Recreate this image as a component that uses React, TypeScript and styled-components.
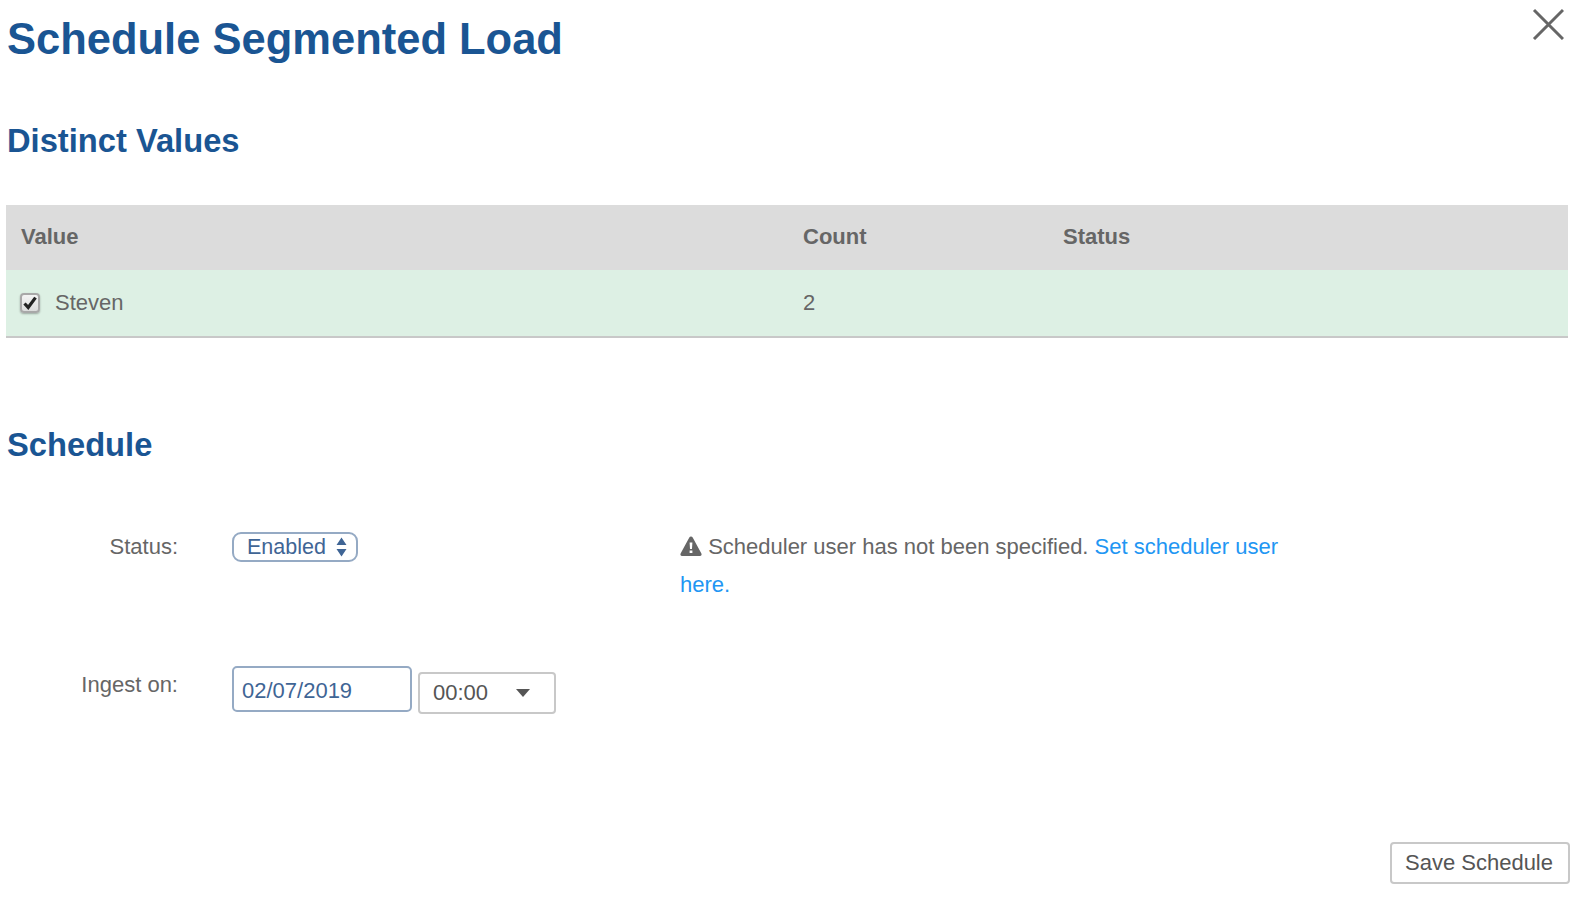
import styled, { createGlobalStyle } from "styled-components"

const GlobalStyle = createGlobalStyle`
    html, body {
        margin: 0;
        padding: 0;
        background: #fff;
    }
    body {
        font-family: "Liberation Sans", Arial, sans-serif;
        color: #666;
    }
`

const App = () => {
    return (
        <Page>
            <GlobalStyle />
            <CloseButton aria-label="Close">
                <svg width="32" height="32" viewBox="0 0 32 32">
                    <path d="M2 2 L31 31 M31 2 L2 31" stroke="#666" strokeWidth="3" fill="none" />
                </svg>
            </CloseButton>
            <Title>Schedule Segmented Load</Title>
            <SectionTitle>Distinct Values</SectionTitle>
            <Table>
                <HeadRow>
                    <ValueCell>Value</ValueCell>
                    <CountCell>Count</CountCell>
                    <StatusCell>Status</StatusCell>
                </HeadRow>
                <BodyRow>
                    <ValueCell>
                        <Check>
                            <svg width="16" height="16" viewBox="0 0 16 16">
                                <path d="M2.5 8.5 L6.2 12.4 L13.5 2.6" stroke="#222" strokeWidth="3.2" fill="none" />
                            </svg>
                        </Check>
                        Steven
                    </ValueCell>
                    <CountCell>2</CountCell>
                    <StatusCell />
                </BodyRow>
            </Table>
            <ScheduleTitle>Schedule</ScheduleTitle>
            <StatusLine>
                <Label>Status:</Label>
                <Dropdown>
                    Enabled
                    <svg width="11" height="20" viewBox="0 0 11 20">
                        <path d="M5.5 0.5 L10.5 8 L0.5 8 Z M0.5 12 L10.5 12 L5.5 19.5 Z" fill="#3f6595" />
                    </svg>
                </Dropdown>
                <Notice>
                    <svg width="22" height="20" viewBox="0 0 22 20">
                        <path
                            fillRule="evenodd"
                            d="M11 0.5 C11.8 0.5 12.3 0.9 12.7 1.6 L21.4 17.4 C22 18.6 21.3 20 20 20 L2 20 C0.7 20 0 18.6 0.6 17.4 L9.3 1.6 C9.7 0.9 10.2 0.5 11 0.5 Z M9.6 6.5 L10 13 L12 13 L12.4 6.5 Z M9.6 14.4 L9.6 17 L12.4 17 L12.4 14.4 Z"
                            fill="#666"
                        />
                    </svg>{" "}
                    Scheduler user has not been specified. <Link>Set scheduler user here.</Link>
                </Notice>
            </StatusLine>
            <IngestLine>
                <IngestLabel>Ingest on:</IngestLabel>
                <DateInput>02/07/2019</DateInput>
                <TimeSelect>
                    00:00
                    <Caret />
                </TimeSelect>
            </IngestLine>
            <Footer>
                <SaveButton>Save Schedule</SaveButton>
            </Footer>
        </Page>
    )
}
export default App

const Page = styled.div`
    position: relative;
    width: 1584px;
    height: 898px;
    box-sizing: border-box;
    padding: 0 16px 0 6px;
    overflow: hidden;
`
const CloseButton = styled.div`
    position: absolute;
    top: 8px;
    left: 1532px;
    width: 32px;
    height: 32px;
`
const Title = styled.h1`
    margin: 0;
    padding: 13px 0 0 1px;
    height: 53px;
    font-size: 43.5px;
    line-height: 52px;
    font-weight: bold;
    color: #1a5593;
`
const SectionTitle = styled.h2`
    margin: 0;
    padding: 55px 0 0 1px;
    font-size: 32.7px;
    line-height: 40px;
    font-weight: bold;
    color: #1a5593;
`
const ScheduleTitle = styled(SectionTitle)`
    padding-top: 87px;
`
const Table = styled.div`
    margin-top: 44px;
    display: flex;
    flex-direction: column;
`
const HeadRow = styled.div`
    display: grid;
    grid-template-columns: 782px 260px 1fr;
    height: 65px;
    padding-bottom: 2px;
    box-sizing: border-box;
    align-items: center;
    background: #dcdcdc;
    font-size: 22px;
    font-weight: bold;
`
const BodyRow = styled(HeadRow)`
    height: 68px;
    padding-bottom: 0;
    background: #ddf0e4;
    border-bottom: 2px solid #c8c8c8;
    font-weight: normal;
`
const ValueCell = styled.div`
    display: flex;
    align-items: center;
    padding-left: 15px;
`
const CountCell = styled.div`
    padding-left: 15px;
`
const StatusCell = styled.div`
    padding-left: 15px;
`
const Check = styled.div`
    box-sizing: border-box;
    width: 20px;
    height: 20px;
    margin: -1px 15px 0 -1px;
    display: flex;
    align-items: center;
    justify-content: center;
    background: linear-gradient(#f4f4f4, #dcdcdc);
    border: 2px solid #a8a8a8;
    border-radius: 4px;
    box-shadow: 0 1px 2px rgba(0, 0, 0, 0.3);
`
const StatusLine = styled.div`
    margin-top: 63px;
    display: flex;
    align-items: flex-start;
    height: 100px;
    font-size: 22px;
    line-height: 38px;
`
const Label = styled.div`
    width: 172px;
    margin-right: 54px;
    text-align: right;
`
const Dropdown = styled.div`
    box-sizing: border-box;
    width: 126px;
    height: 30px;
    margin-top: 4px;
    padding: 0 9px 0 13px;
    display: flex;
    align-items: center;
    justify-content: space-between;
    border: 2px solid #95aac4;
    border-radius: 9px;
    color: #3f6595;
    font-size: 21.5px;
    line-height: 26px;
`
const Notice = styled.div`
    width: 610px;
    margin-left: 322px;
    svg {
        vertical-align: -2px;
    }
`
const Link = styled.a`
    color: #2196f3;
`
const IngestLine = styled.div`
    margin-top: 38px;
    display: flex;
    align-items: flex-start;
    font-size: 22px;
`
const IngestLabel = styled(Label)`
    line-height: 38px;
`
const DateInput = styled.div`
    box-sizing: border-box;
    width: 180px;
    height: 46px;
    padding: 4px 0 0 8px;
    display: flex;
    align-items: center;
    border: 2px solid #95aac4;
    border-radius: 5px;
    color: #3f6595;
`
const TimeSelect = styled.div`
    box-sizing: border-box;
    width: 138px;
    height: 42px;
    margin: 6px 0 0 6px;
    padding: 0 24px 0 13px;
    display: flex;
    align-items: center;
    justify-content: space-between;
    border: 2px solid #c8c8c8;
    border-radius: 4px;
    color: #555;
`
const Caret = styled.span`
    width: 0;
    height: 0;
    border-left: 7.5px solid transparent;
    border-right: 7.5px solid transparent;
    border-top: 8px solid #555;
`
const Footer = styled.div`
    position: absolute;
    right: 14px;
    bottom: 14px;
`
const SaveButton = styled.div`
    box-sizing: border-box;
    width: 180px;
    height: 42px;
    padding-right: 2px;
    display: flex;
    align-items: center;
    justify-content: center;
    border: 2px solid #c8c8c8;
    border-radius: 4px;
    font-size: 22px;
    color: #555;
`
